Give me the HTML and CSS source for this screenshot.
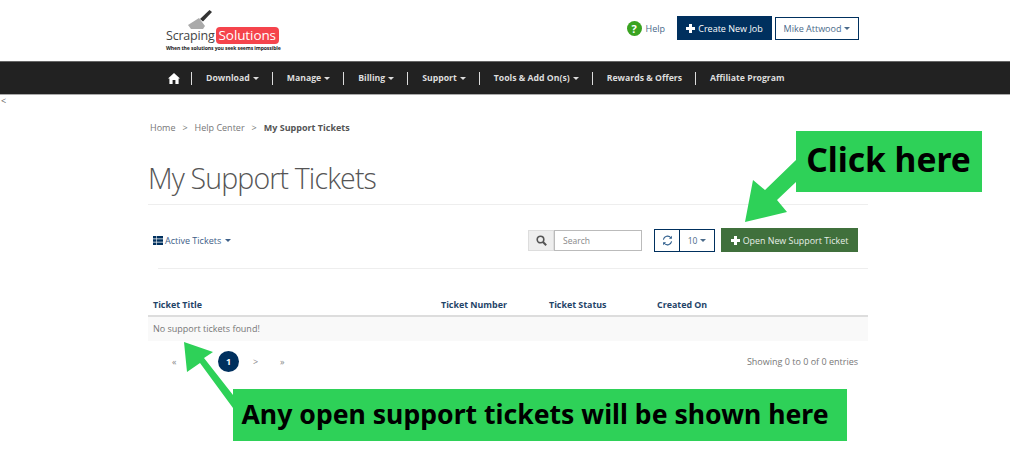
FILE: index.html
```html
<!DOCTYPE html>
<html lang="en">
<head>
<meta charset="utf-8">
<title>My Support Tickets</title>
<link rel="stylesheet" href="styles.css">
</head>
<body>
<header class="top">
  <div class="logo">
    <svg class="spatula" width="24" height="19" viewBox="0 0 24 19"><path d="M12 9 L15 11.5 L24 2 L21.5 0 Z" fill="#333"/><path d="M0 15 L11 8 L17 16 L15 19 L3 19 Z" fill="#aaa"/></svg>
    <div class="logo-row"><span class="logo-a">Scraping</span><span class="logo-b">Solutions</span></div>
    <div class="logo-tag">When the solutions you seek seems impossible</div>
  </div>
  <div class="actions">
    <span class="help-icon">?</span>
    <span class="help">Help</span>
    <span class="btn-job"><svg class="plus" width="9" height="9" viewBox="0 0 9 9"><path d="M3 0H6V3H9V6H6V9H3V6H0V3H3Z" fill="#fff"/></svg>Create New Job</span>
    <span class="btn-user">Mike Attwood<i class="caret"></i></span>
  </div>
</header>
<nav class="nav">
  <svg class="home" width="12" height="11" viewBox="0 0 12 11"><path d="M6 0 L12 5.6 L10.6 5.6 L10.6 11 L7.4 11 L7.4 7 L4.6 7 L4.6 11 L1.4 11 L1.4 5.6 L0 5.6 Z" fill="#fff"/></svg>
  <span class="sep"></span>
  <a class="item">Download<i class="caret"></i></a>
  <span class="sep"></span>
  <a class="item">Manage<i class="caret"></i></a>
  <span class="sep"></span>
  <a class="item">Billing<i class="caret"></i></a>
  <span class="sep"></span>
  <a class="item">Support<i class="caret"></i></a>
  <span class="sep"></span>
  <a class="item">Tools &amp; Add On(s)<i class="caret"></i></a>
  <span class="sep"></span>
  <a class="item">Rewards &amp; Offers</a>
  <span class="sep"></span>
  <a class="item">Affiliate Program</a>
</nav>
<div class="back">&lt;</div>
<main class="main">
  <div class="crumbs"><span>Home</span><span class="gt">&gt;</span><span>Help Center</span><span class="gt">&gt;</span><b>My Support Tickets</b></div>
  <h1 class="title">My Support Tickets</h1>
  <div class="toolbar">
    <div class="filter">
      <svg width="10" height="9" viewBox="0 0 10 9"><path d="M0 0H3V2.6H0ZM3.6 0H10V2.6H3.6ZM0 3.2H3V5.8H0ZM3.6 3.2H10V5.8H3.6ZM0 6.4H3V9H0ZM3.6 6.4H10V9H3.6Z" fill="#00305e"/></svg>
      <span>Active Tickets</span><i class="caret"></i>
    </div>
    <div class="tools">
      <div class="search">
        <span class="search-ic"><svg width="11" height="11" viewBox="0 0 11 11"><circle cx="4.5" cy="4.5" r="3.3" fill="none" stroke="#555" stroke-width="1.6"/><path d="M7 7 L10.2 10.2" stroke="#555" stroke-width="2"/></svg></span>
        <span class="search-box">Search</span>
      </div>
      <div class="pager-ctl">
        <span class="refresh"><svg width="11" height="11" viewBox="0 0 12 12" fill="none" stroke="#2a5a8a" stroke-width="1.2"><path d="M1.5 5 A4.6 4.6 0 0 1 9.6 3"/><path d="M10.5 7 A4.6 4.6 0 0 1 2.4 9"/><path d="M10.8 .8V4H7.6Z" fill="#2a5a8a" stroke="none"/><path d="M1.2 11.2V8H4.4Z" fill="#2a5a8a" stroke="none"/></svg></span>
        <span class="size">10<i class="caret"></i></span>
      </div>
      <span class="btn-open"><svg class="plus" width="9" height="9" viewBox="0 0 9 9"><path d="M3 0H6V3H9V6H6V9H3V6H0V3H3Z" fill="#fff"/></svg>Open New Support Ticket</span>
    </div>
  </div>
  <hr class="rule">
  <div class="thead">
    <span class="c1">Ticket Title</span><span class="c2">Ticket Number</span><span class="c3">Ticket Status</span><span>Created On</span>
  </div>
  <div class="row">No support tickets found!</div>
  <div class="foot">
    <div class="pages"><span class="pg">«</span><span class="cur">1</span><span class="pg">&gt;</span><span class="pg">»</span></div>
    <span class="info">Showing 0 to 0 of 0 entries</span>
  </div>
</main>

<div class="note note-click">Click here</div>
<div class="note note-any">Any open support tickets will be shown here</div>
<svg class="arrows" width="1010" height="471" viewBox="0 0 1010 471">
  <path d="M796 160 L765 190 L753 180 L745 222 L787 212 L777 200 L796 182 Z" fill="#2ed158"/>
  <path d="M184 342 L213 352 L204 358 L233 395 L233 408 L200 363 L187 372 Z" fill="#2ed158"/>
</svg>
</body>
</html>
```
FILE: styles.css
```css
* { box-sizing: border-box; }
html, body { margin: 0; padding: 0; }
body { font-family: "Open Sans", "Liberation Sans", sans-serif; background: #fff; color: #666; width: 1010px; height: 471px; overflow: hidden; position: relative; }
.top { height: 61px; display: flex; justify-content: space-between; padding: 10px 151px 0 166px; }
.logo { width: 120px; }
.spatula { display: block; margin-left: 22px; margin-bottom: -2px; }
.logo-row { display: flex; align-items: center; height: 17px; }
.logo-a { font-size: 12.5px; color: #444; letter-spacing: -.2px; }
.logo-b { background: #f5444c; color: #fff; font-size: 13.5px; line-height: 17px; padding: 0 3px; border-radius: 4px; letter-spacing: -.1px; margin-left: 1px; }
.logo-tag { font-size: 5.1px; color: #222; font-weight: 700; margin-top: 1px; white-space: nowrap; letter-spacing: -.1px; }
.actions { display: flex; align-items: center; height: 24px; margin-top: 6px; font-size: 9px; }
.help-icon { width: 15px; height: 15px; border-radius: 50%; background: #3aa321; color: #fff; font-weight: 700; font-size: 11px; line-height: 15px; text-align: center; margin-right: 4px; }
.help { color: #4a6a8a; margin-right: 12px; }
.btn-job { height: 24px; width: 95px; background: #00305e; color: #fff; display: flex; align-items: center; justify-content: center; margin-right: 3px; white-space: nowrap; }
.plus { margin-right: 3px; flex: none; }
.btn-user { height: 23px; width: 84px; border: 1px solid #00305e; color: #4a6a8a; display: flex; align-items: center; justify-content: center; white-space: nowrap; }
.caret { display: inline-block; width: 0; height: 0; border-left: 3px solid transparent; border-right: 3px solid transparent; border-top: 3px solid currentColor; margin-left: 3px; vertical-align: middle; }
.nav { height: 34px; background: #222; border-top: 1px solid #666; border-bottom: 1px solid #aaa; display: flex; align-items: center; padding-left: 168px; color: #ddd; font-size: 8.7px; font-weight: 700; white-space: nowrap; }
.home { margin-right: 11px; }
.sep { width: 1px; height: 13px; background: #ddd; }
.item { padding: 0 13px 0 14px; }
.back { font-size: 9px; line-height: 11px; padding-left: 1px; color: #666; }
.main { margin-left: 148px; width: 720px; }
.crumbs { font-size: 9px; color: #777; margin: 16px 0 0 2px; line-height: 12px; display: flex; }
.crumbs b { color: #555; }
.gt { margin: 0 7px; }
.title { font-size: 28.5px; font-weight: 300; color: #555; margin: 25px 0 0; line-height: 38px; letter-spacing: -.85px; padding-bottom: 7px; border-bottom: 1px solid #eee; height: 46px; }
.toolbar { display: flex; justify-content: space-between; align-items: center; margin-top: 23px; height: 24px; padding-left: 5px; padding-right: 10px; }
.filter { display: flex; align-items: center; gap: 2px; font-size: 9px; color: #3e6088; }
.filter .caret { margin-left: 2px; }
.tools { display: flex; align-items: center; font-size: 8.5px; }
.search { display: flex; height: 21px; margin-right: 12px; }
.search-ic { width: 26px; background: #eee; border: 1px solid #ddd; display: flex; align-items: center; justify-content: center; }
.search-box { width: 88px; border: 1px solid #bbb; padding-left: 8px; line-height: 19px; color: #888; }
.pager-ctl { display: flex; height: 23px; border: 1px solid #00305e; margin-right: 6px; color: #4a6a8a; }
.refresh { width: 25px; border-right: 1px solid #00305e; display: flex; align-items: center; justify-content: center; }
.size { width: 34px; display: flex; align-items: center; justify-content: center; }
.btn-open { height: 24px; width: 137px; background: #40703c; color: #e8efe8; display: flex; align-items: center; justify-content: center; white-space: nowrap; font-size: 8.9px; }
.rule { border: 0; border-top: 1px solid #eee; margin: 16px 0 0 10px; }
.thead { display: flex; font-size: 8.9px; font-weight: 700; color: #1f4468; margin-top: 29px; padding: 0 0 4px 5px; border-bottom: 2px solid #ddd; line-height: 13px; height: 19px; }
.c1 { width: 288px; }
.c2, .c3 { width: 108px; }
.row { height: 24px; background: #f9f9f9; font-size: 9px; color: #777; line-height: 24px; padding-left: 5px; }
.foot { display: flex; justify-content: space-between; align-items: center; margin-top: 9px; height: 22px; padding: 0 10px 0 24px; }
.pages { display: flex; align-items: center; font-size: 9px; color: #888; }
.pg { width: 27px; }
.pg:first-child { width: 46px; }
.cur { width: 21px; height: 21px; border-radius: 50%; background: #00305e; color: #fff; font-weight: 700; text-align: center; line-height: 21px; margin-right: 14px; }
.info { font-size: 9px; color: #777; }
.note { position: absolute; background: #2ed158; color: #000; font-weight: 700; display: flex; align-items: center; justify-content: center; white-space: nowrap; font-family: "Noto Sans", "Open Sans", sans-serif; }
.note-click { left: 796px; top: 131px; width: 186px; height: 61px; font-size: 33.6px; padding: 0 1px 6px 0; }
.note-any { left: 233px; top: 389px; width: 614px; height: 52px; font-size: 26.6px; padding: 0 10px 3px 0; }
.arrows { position: absolute; left: 0; top: 0; pointer-events: none; }
```
